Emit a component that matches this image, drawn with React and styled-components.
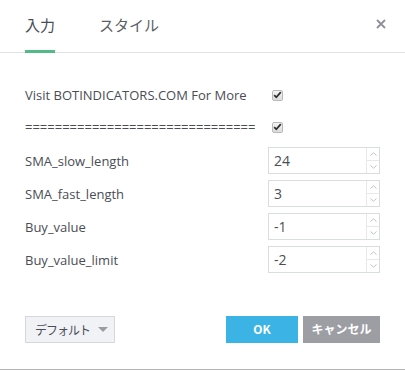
import React, { useState } from 'react';
import styled, { createGlobalStyle } from 'styled-components';

const GlobalStyle = createGlobalStyle`
  html, body {
    margin: 0;
    padding: 0;
    background: #ffffff;
  }
  body {
    font-family: "Open Sans", "Noto Sans CJK JP", sans-serif;
  }
`;

const Dialog = styled.div`
  width: 405px;
  height: 370px;
  box-sizing: border-box;
  background: #ffffff;
  border-bottom: 1px solid #b4b4b4;
  display: flex;
  flex-direction: column;
`;

const Header = styled.div`
  display: flex;
  align-items: stretch;
  height: 52px;
  padding: 0 17px 0 25px;
  border-bottom: 1px solid #e0e3eb;
`;

const Tab = styled.div`
  position: relative;
  display: flex;
  align-items: center;
  margin-right: 44px;
  padding-bottom: 3px;
  font-family: "Noto Sans CJK JP", sans-serif;
  font-size: 15px;
  color: ${(p) => (p.$active ? '#4a4d55' : '#5c5f66')};
  cursor: pointer;

  &::after {
    content: '';
    display: ${(p) => (p.$active ? 'block' : 'none')};
    position: absolute;
    left: 0;
    right: 0;
    bottom: -1px;
    height: 3px;
    background: #53b987;
  }
`;

const Close = styled.button`
  margin-left: auto;
  align-self: center;
  margin-bottom: 5px;
  width: 14px;
  height: 14px;
  padding: 0;
  border: none;
  background: none;
  display: flex;
  align-items: center;
  justify-content: center;
  cursor: pointer;
`;

const Body = styled.div`
  padding: 27px 25px 0 25px;
  display: flex;
  flex-direction: column;
`;

const Row = styled.div`
  display: flex;
  align-items: center;
  height: ${(p) => p.$h || 33}px;
`;

const Label = styled.div`
  width: ${(p) => p.$w || 243}px;
  font-size: 13px;
  color: #4a4d55;
  white-space: nowrap;
`;

const Check = styled.span`
  width: 11px;
  height: 11px;
  box-sizing: border-box;
  border: 1px solid #b9b9b9;
  border-radius: 2px;
  background: linear-gradient(#f4f4f4, #dcdcdc);
  display: flex;
  align-items: center;
  justify-content: center;
`;

const NumBox = styled.div`
  width: 112px;
  height: 27px;
  box-sizing: border-box;
  border: 1px solid #dadde0;
  display: flex;
`;

const NumInput = styled.input`
  flex: 1;
  min-width: 0;
  border: none;
  outline: none;
  padding: 0 0 0 5px;
  font-family: "Open Sans", sans-serif;
  font-size: 14px;
  color: #4a4d55;
  background: transparent;
`;

const Spinner = styled.div`
  width: 12px;
  border-left: 1px solid #e6e8ea;
  display: flex;
  flex-direction: column;
`;

const SpinHalf = styled.div`
  flex: 1;
  display: flex;
  align-items: center;
  justify-content: center;
  & + & {
    border-top: 1px solid #e6e8ea;
  }
`;

const Footer = styled.div`
  margin-top: auto;
  padding: 0 25px 26px 25px;
  display: flex;
  align-items: center;
`;

const DefaultButton = styled.button`
  width: 90px;
  height: 27px;
  box-sizing: border-box;
  border: 1px solid #d6d8dc;
  background: #f1f2f5;
  display: flex;
  align-items: center;
  padding: 0 0 1px 9px;
  gap: 8px;
  font-family: "Noto Sans CJK JP", sans-serif;
  font-size: 12px;
  letter-spacing: -1px;
  white-space: nowrap;
  color: #4a4d55;
  cursor: pointer;
`;

const Caret = styled.span`
  width: 0;
  height: 0;
  margin-top: 1px;
  border-left: 5px solid transparent;
  border-right: 5px solid transparent;
  border-top: 5px solid #9a9ca1;
`;

const ActionButton = styled.button`
  height: 27px;
  width: ${(p) => p.$w}px;
  margin-left: ${(p) => p.$ml || 0}px;
  border: none;
  background: ${(p) => p.$bg};
  color: #ffffff;
  font-family: "Noto Sans CJK JP", sans-serif;
  font-weight: 700;
  font-size: ${(p) => p.$fs || 12}px;
  padding: 0 0 2px 0;
  white-space: nowrap;
  cursor: pointer;
`;

const CheckIcon = () => (
  <svg width="9" height="8" viewBox="0 0 9 8">
    <path d="M1.2 4.2 L3.3 6.3 L7.8 1.2" fill="none" stroke="#2f2f2f" strokeWidth="1.8" />
  </svg>
);

const Arrow = ({ up }) => (
  <svg width="7" height="4" viewBox="0 0 7 4">
    <path d={up ? 'M0.5 3.5 L3.5 0.8 L6.5 3.5' : 'M0.5 0.5 L3.5 3.2 L6.5 0.5'} fill="none" stroke="#b8bcc2" strokeWidth="0.9" />
  </svg>
);

const NumberField = ({ value }) => {
  const [val, setVal] = useState(value);
  return (
    <NumBox>
      <NumInput value={val} onChange={(e) => setVal(e.target.value)} />
      <Spinner>
        <SpinHalf><Arrow up /></SpinHalf>
        <SpinHalf><Arrow /></SpinHalf>
      </Spinner>
    </NumBox>
  );
};

const fields = [
  { name: 'SMA_slow_length', value: '24' },
  { name: 'SMA_fast_length', value: '3' },
  { name: 'Buy_value', value: '-1' },
  { name: 'Buy_value_limit', value: '-2' },
];

const App = () => {
  const [tab, setTab] = useState(0);
  return (
    <>
      <GlobalStyle />
      <Dialog>
        <Header>
          <Tab $active={tab === 0} onClick={() => setTab(0)}>入力</Tab>
          <Tab $active={tab === 1} onClick={() => setTab(1)}>スタイル</Tab>
          <Close>
            <svg width="10" height="10" viewBox="0 0 10 10">
              <path d="M1 1 L9 9 M9 1 L1 9" stroke="#8d9096" strokeWidth="1.8" />
            </svg>
          </Close>
        </Header>
        <Body>
          <Row $h={30}>
            <Label $w={247}>Visit BOTINDICATORS.COM For More</Label>
            <Check><CheckIcon /></Check>
          </Row>
          <Row $h={34}>
            <Label $w={247}>===============================</Label>
            <Check><CheckIcon /></Check>
          </Row>
          {fields.map((f) => (
            <Row key={f.name}>
              <Label>{f.name}</Label>
              <NumberField value={f.value} />
            </Row>
          ))}
        </Body>
        <Footer>
          <DefaultButton>デフォルト<Caret /></DefaultButton>
          <ActionButton $w={72} $ml={111} $bg="#3bb3e4">OK</ActionButton>
          <ActionButton $w={77} $ml={5} $bg="#9c9ea4" $fs={12}>キャンセル</ActionButton>
        </Footer>
      </Dialog>
    </>
  );
};

export default App;
